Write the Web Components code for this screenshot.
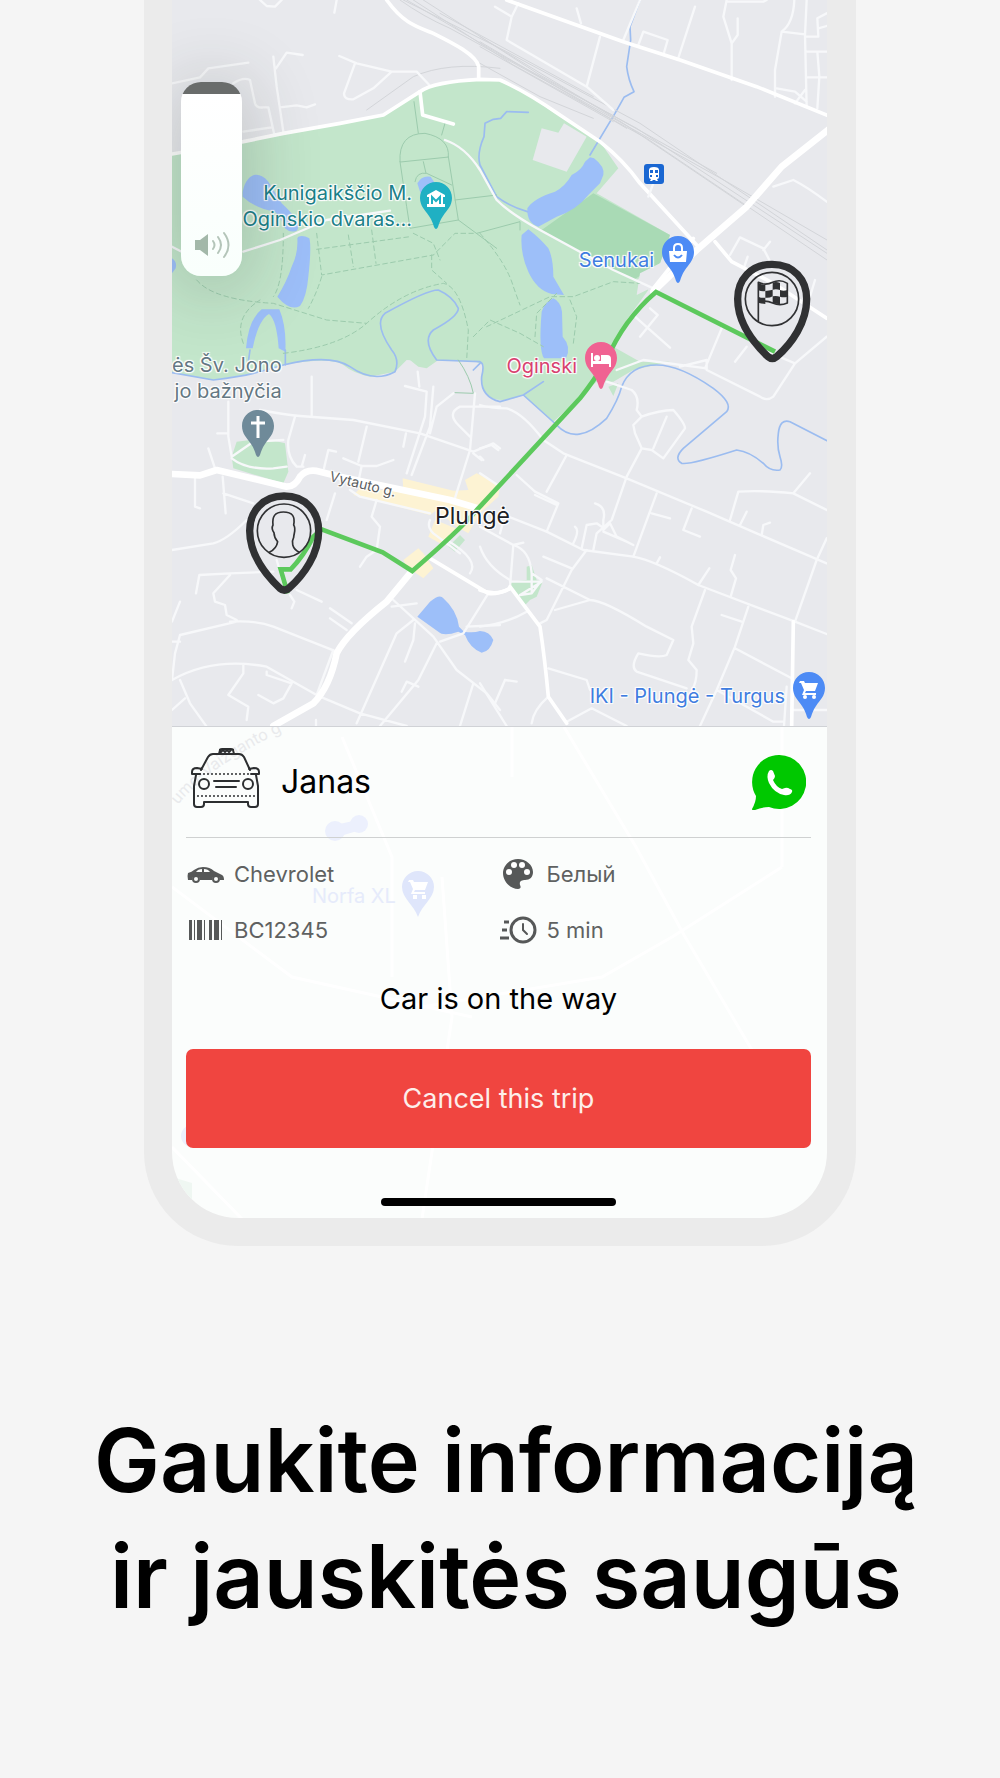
<!DOCTYPE html>
<html lang="lt">
<head>
<meta charset="utf-8">
<meta name="viewport" content="width=device-width, initial-scale=1">
<title>Gaukite informaciją ir jauskitės saugūs</title>
<style>
    body {
        margin: 0;
        background: #f5f5f5;
        color: #000;
        font-family: Inter, "Liberation Sans", sans-serif;
    }
</style>
</head>
<body>

<phone-frame>
    <city-map>
        <map-place kind="museum" style="right: 375px; top: 180px">Kunigaikščio M.<br>Oginskio dvaras...</map-place>
        <map-place kind="shop" style="right: 133px; top: 236px">Senukai</map-place>
        <map-place kind="hotel" style="right: 210px; top: 342px">Oginski</map-place>
        <map-place kind="church" style="left: 0; top: 352px">ės Šv. Jono<br>jo bažnyčia</map-place>
        <map-place kind="cart" style="right: 2px; top: 672px">IKI - Plungė - Turgus</map-place>
        <map-place kind="town" style="left: 263px; top: 502px">Plungė</map-place>
        <map-place kind="street" style="left: 157px; top: 474px">Vytauto g.</map-place>
        <map-place kind="station" style="right: 163px; top: 164px"></map-place>
        <volume-slider></volume-slider>
    </city-map>
    <trip-panel driver="Janas">
        <trip-fact icon="car">Chevrolet</trip-fact>
        <trip-fact icon="palette">Белый</trip-fact>
        <trip-fact icon="barcode">BC12345</trip-fact>
        <trip-fact icon="clock">5 min</trip-fact>
        <span slot="status">Car is on the way</span>
        <span slot="action">Cancel this trip</span>
    </trip-panel>
</phone-frame>
<promo-title>Gaukite informaciją<br>ir jauskitės saugūs</promo-title>

<script>
class PhoneFrame extends HTMLElement {
    connectedCallback() {
        this.shadow = this.attachShadow({ mode: 'open' });
        this.shadow.innerHTML = `
            <style>
            :host {
              display: block;
              box-sizing: border-box;
              width: 100%;
              max-width: 712px;
              margin: 0 auto;
              padding: 0 29px 28px 28px;
              background: #ebebeb;
              border-radius: 0 0 94px 94px;
            }
            .screen {
              overflow: hidden;
              background: #fbfdfc;
              border-radius: 0 0 66px 66px;
            }
            </style>
            <div class="screen"><slot></slot></div>`;
    }
}

class CityMap extends HTMLElement {
    connectedCallback() {
        this.shadow = this.attachShadow({ mode: 'open' });
        this.shadow.innerHTML = this.styles() + `
            <svg viewBox="96 0 1965 2181" preserveAspectRatio="xMinYMin slice" aria-hidden="true">
                ${this.areas()}
                ${this.paths()}
                ${this.roads()}
                ${this.route()}
            </svg>
            <slot></slot>`;
    }

    styles() {
        return `
            <style>
            :host {
              display: block;
              position: relative;
              height: 727px;
              overflow: hidden;
              background: #e8e9ed;
            }
            svg {
              display: block;
              box-sizing: border-box;
              width: 100%;
              height: 100%;
              border-bottom: 1px solid #d0d2d6;
            }
            path { fill: none; stroke-linejoin: round; stroke-linecap: round; }
            .park path { fill: #c3e6cb; }
            .park .dark { fill: #a9dab5; }
            .park .plain { fill: #e8e9ed; }
            .park .town { fill: #fdf3d3; }
            .water { fill: #9dbff9; }
            .river { stroke: #9bbcf0; stroke-width: 5; }
            .trail { stroke: #9ccbad; stroke-width: 3; }
            .dash { stroke: #9ccbad; stroke-width: 3; stroke-dasharray: 14 10; }
            .rail { stroke: #d3d5d9; stroke-width: 3; }
            .thin { stroke: #f7f8fa; stroke-width: 7; }
            .road { stroke: #fff; stroke-width: 11; }
            .main { stroke: #fff; stroke-width: 20; }
            .line { stroke: #5cc95c; stroke-width: 14; stroke-linejoin: miter; stroke-linecap: butt; }
            .pin { stroke: #303133; stroke-width: 22; }
            .ring { stroke: #303133; stroke-width: 5; fill: none; }
            .ink { fill: #303133; }
            </style>`;
    }

    areas() {
        return `
            <g class="park">
                <path d="M96 462 310 425 430 400 600 370 730 345 840 275 880 255 1020 238 1080 240 1140 270 1260 350 1380 425 1435 505 1370 580 1590 705 1560 790 1490 840 1525 870 1460 960 1420 1040 1500 1085 1590 1085 1480 1110 1420 1145 1370 1145 1240 1265 1150 1185Q1080 1215 1040 1185 1015 1150 1030 1095L1000 1082H890L840 1082 800 1080 765 1115 690 1130Q640 1120 610 1095 570 1070 430 1095L340 1120 220 1140 96 1118Z"/>
                <path d="M290 1325 370 1315 435 1330 445 1415 430 1450 280 1405 275 1370Z"/>
                <path d="M1160 1700 1175 1695 1190 1740 1208 1745 1190 1790 1170 1800 1155 1815 1110 1755 1112 1745 1160 1740Z"/>
                <path d="M925 1640 960 1605 975 1620 945 1655ZM810 1080H895L860 1105 835 1100ZM1405 1160 1435 1150 1420 1188Z"/>
                <path class="dark" d="M1360 580 1590 705 1560 790 1480 840 1320 755 1205 690Z"/>
                <path class="plain" d="M1205 385 1255 398 1272 370 1340 410 1280 515 1178 480Z"/>
                <path class="plain" d="M1500 820 1620 760 1540 860 1490 885Z"/>
                <path class="town" d="M788 1435 940 1472 985 1470 975 1440 1010 1420 1080 1455 1075 1490 1020 1540 985 1600 950 1580 890 1530 870 1545 640 1485 660 1465 790 1475ZM885 1560 960 1590 900 1630 865 1610ZM790 1680 835 1645 850 1660 880 1705 850 1735 800 1700Z"/>
            </g>
            <path class="water" d="M308 575C320 520 355 510 385 545L425 610Q490 670 470 692 450 700 435 685 425 655 405 635 345 625 308 590Z"/>
            <path class="water" d="M475 710Q490 705 508 715 515 740 505 830 500 890 480 918 450 935 412 890 440 845 455 800 475 760 472 715Z"/>
            <path class="water" d="M318 1045Q325 960 365 928H418Q440 980 436 1055L416 1045Q410 960 387 942 355 960 338 1045Z"/>
            <path class="water" d="M832 550Q845 525 872 530L885 550 845 590ZM96 775Q112 785 107 805L96 820Z"/>
            <path class="water" d="M1350 472 1362 475Q1395 500 1390 525L1380 550Q1360 570 1345 585 1310 630 1250 650L1195 680Q1160 670 1162 625 1180 595 1245 575 1275 560 1295 525 1325 510 1335 485Z"/>
            <path class="water" d="M1165 688Q1200 715 1225 745 1240 775 1240 830L1272 885 1235 882Q1190 870 1165 815 1140 760 1145 705Z"/>
            <path class="water" d="M1240 895Q1262 905 1266 935L1268 1010Q1295 1040 1278 1075H1212Q1195 1050 1205 935 1215 905 1240 895Z"/>
            <path class="water" d="M832 1850 870 1805Q900 1780 910 1795 950 1830 957 1880L972 1895Q1000 1900 1020 1893 1050 1895 1060 1920 1050 1955 1025 1958 990 1945 975 1905L955 1895Q910 1910 895 1895Z"/>`;
    }

    paths() {
        return `
            <path class="river" d="M1500 0 1470 80 1472 120 1460 200Q1465 240 1482 275L1452 292 1425 340 1350 465M1165 337 1100 335 1082 355 1060 358 1035 370 1032 410Q1010 460 1020 495L1070 590Q1110 620 1162 635"/>
            <path class="river" d="M96 1118 220 1140Q300 1130 340 1120T430 1095Q570 1060 630 1100 700 1150 765 1115 780 1080 755 1050 700 970 735 940 860 870 895 870 940 890 955 925 955 950 880 990 845 1020 890 1080L1020 1085Q1035 1090 1025 1130 1020 1190 1080 1205L1150 1185 1250 1275Q1310 1340 1400 1255 1435 1200 1445 1160 1470 1095 1550 1095 1620 1095 1720 1165 1780 1210 1760 1235L1630 1345Q1600 1375 1625 1390 1650 1395 1790 1350 1830 1355 1870 1390 1890 1415 1920 1410 1930 1400 1920 1370 1910 1340 1915 1300 1920 1255 1950 1265L2061 1322M1020 1090 1000 1110M1150 1185 1210 1145M436 1050V1095M330 1050 325 1085"/>
            <path class="trail" d="M822 305 835 400M915 370 905 405M780 485Q775 400 855 400 930 415 925 470ZM780 485 800 620 810 685 955 660 925 470M850 485 858 520M825 545Q830 515 860 520L935 555M945 600 1070 585M955 660 1070 745M1010 700 1140 665V690M955 1080Q990 1130 1000 1180L945 1178"/>
            <path class="dash" d="M430 700Q430 850 400 890M170 840Q220 900 400 910L560 960 680 970Q790 870 910 850 960 860 985 990L980 1080M310 1030Q280 950 360 900M430 1060Q600 1040 680 970M530 700 545 825 880 765 945 700 1000 700M530 748 810 710M625 705 640 800M695 690 708 790M545 830Q530 880 505 925M875 765V810L920 850M820 700 880 730 900 780M1020 700Q1100 790 1120 860L1140 915M1000 1010 1050 960 1140 1000 1210 1040M1040 980 1230 890 1300 890 1420 845 1500 850M1185 1010 1190 940 1250 880M1290 900 1310 950 1300 1030"/>
            <path class="rail" d="M680 330 820 230Q920 185 1080 205M780 0Q850 50 930 85L1250 260 1760 545 2061 720M790 0 1100 155 1500 370 2061 750M800 0 1100 175 1490 385 2061 760M820 0 1120 195 1520 415 2061 780M850 0 1200 225 1730 520M900 40 1360 290M1020 110 1450 370 1820 620M1020 125 1460 385M1020 140 1420 365M1020 190 1200 290 1360 355"/>`;
    }

    roads() {
        return `
            <g>
                <path class="thin" d="M360 0 380 18 405 20 425 0M590 0 583 38M96 250 180 232 205 205 325 188M280 250Q310 230 330 240L345 310Q350 325 370 322H385L402 400M310 395 395 382M400 170 410 260 430 395M408 205 440 158 488 165M420 322 470 316 500 322 525 313M598 168 650 190 755 215H830L868 255M645 190 612 280Q612 300 640 298L700 265 755 215"/>
                <path class="road" d="M740 0C790 70 830 80 880 100 940 130 1010 165 1016 200V235M840 275 848 345 940 372"/>
                <path class="thin" d="M96 740 125 755M310 755 420 720 560 660 750 632M915 420Q975 440 1020 510L1070 600Q1110 640 1200 690L1420 810 1540 865"/>
                <path class="road" d="M96 462 310 425 430 400 600 370 730 345 840 275Q880 245 1020 238L1080 240Q1160 275 1260 345L1380 425Q1450 480 1500 550L1670 735"/>
            </g>
            <g transform="translate(1020 0)">
                <path class="thin" d="M45 20 95 50 115 10M95 50 80 120 320 260 400 330M360 110 320 260M480 0 430 120M475 135 490 95 563 120 550 165M645 20 593 180M740 0 730 50 755 130V240M740 5H850L860 0M773 55V105L755 130M943 0Q940 70 905 95L885 210V290M905 95 975 103M980 0 975 105 980 320M1040 40 1012 55 1015 110H980M1015 85 1040 78M980 155H1040M1012 155 1018 230 1012 325M980 232H1040M890 265 945 275 980 305M975 270 945 310M290 25 303 70M520 550 505 590M880 560 940 540Q980 560 1040 605M750 765 780 712 850 745 868 780M850 750 870 725M803 770 793 800M930 390"/>
                <path class="road" d="M80 0 430 125 600 180 830 260 1040 345M1060 360 1035 400M640 715 520 865M705 725 755 785 880 850 1040 955"/>
                <path class="main" d="M1050 385 905 500 800 620 650 750 520 875"/>
                <path class="thin" d="M510 925 533 945 480 1010M465 950 570 1043M725 985 675 1105M850 1050 945 1090 1040 1010M945 1090 880 1190Q860 1205 840 1190L680 1110V1080L600 1100M800 1040 765 1085M1005 840 990 890M410 1110 490 1080 680 1105"/>
            </g>
            <g transform="translate(0 1080)">
                <path class="thin" d="M265 125V230L275 290 340 245 430 240M232 220H265M275 295Q320 330 400 325L440 320M205 265 225 325M360 150Q440 165 480 168L640 180 840 220 1000 275 1060 250 1080 265M515 50V165M465 170 445 240Q440 290 470 320L490 320M495 285 485 320M588 275 565 270 552 325M610 295 665 318 710 318 760 300M680 200 655 305M665 318 655 365M795 78 860 95 855 170 800 340M833 35 838 80M880 80 870 200 815 345M798 220 790 260M940 100 890 140 870 220M1005 100 990 270 940 430M1000 280 1025 300M1080 140H960Q920 160 955 195L990 230M165 355V440L180 445M248 350 257 460M250 400 340 430M96 570 220 550Q260 540 320 480M585 400 560 480M710 420 695 470 720 500 710 570 680 590 660 620M168 700 178 645 270 640 400 635M270 645 220 700 225 725 255 735 260 765 290 780M120 725 96 785M470 690 545 725M450 705 463 725 455 745M570 745 635 790M570 775 620 810M270 785Q350 780 400 800L590 875M290 785 120 825 105 880 96 960M96 845H120M96 960Q220 890 380 920L530 1005M310 915V940L265 1005 325 1040 320 1080M380 935V945L455 970 430 1015 400 1030 355 1005M120 960 150 1030 200 1100M96 1050 135 1015M540 1010 660 1060 800 1098M580 870 530 1005M760 720 880 830 950 930 1040 1000M820 780 770 820 650 1090M825 790 820 840 795 905M890 850 835 960 720 1098M785 995 800 965 835 980M1000 970 960 1098M900 845 970 820 1045 700M980 800 1080 795M755 740 830 730M870 480Q860 500 880 520L960 580M920 540Q1020 600 990 640M1020 560Q1040 620 1110 660M1040 1000 1080 1050M410 600 430 670M528 1080V1098"/>
                <path class="thin" d="M630 390 660 410 870 460"/>
                <path class="road" d="M870 595 1045 700Q1070 705 1110 685"/>
                <path class="main" d="M96 342 180 346 230 330 440 380Q465 380 480 350 500 325 540 335L600 350 930 420 1015 445M810 640 740 725Q620 820 590 880 570 980 520 1030L400 1098"/>
            </g>
            <g transform="translate(1020 1080)">
                <path class="thin" d="M380 65 455 90Q480 110 470 150L485 170Q540 150 580 150 615 190 615 205L550 295 515 270 485 265 465 220 460 195 485 170M560 170 520 265M485 265 440 350 395 480 350 520 340 570M260 285 200 395M110 345 165 395 235 430 200 515M165 405 230 435M345 430Q380 440 370 480V510L390 490 410 530 460 555M370 515 440 545M285 500Q300 510 280 550M305 565 320 495 350 490 365 500M530 400 460 590M515 460 570 475M635 445 610 510 660 530M750 480 775 395Q840 390 940 400L1040 450M940 400 990 340M780 495 800 455M845 525 850 495 870 488M530 610 540 592M655 675 688 625M765 585 752 630 768 655 752 710M675 690 635 800 640 850 625 900 650 930Q650 970 635 990M725 765 785 785M805 740 765 860 710 990 660 1098M765 865 935 955M1040 535 1010 600 945 785M320 570 275 630 200 780 180 790M190 590 275 625M200 655 330 720 225 750M330 720Q370 720 500 800L580 840 560 885Q540 895 475 880 450 920 470 935L620 985M205 925 320 960 330 990M75 960 110 965M75 960 45 1030M0 970 80 1098M155 1090Q160 1050 205 1010M260 1085 335 1045 440 1098M935 1050H1040M710 990 880 1085H910M912 1098 920 980M0 800Q80 790 140 755M60 520 68 490M100 555 130 548M100 555Q150 570 155 640L185 660 155 700 120 705M155 640V700M90 665H185L120 705M0 265 35 255 55 270M0 290 10 300"/>
                <path class="thin" d="M0 135Q30 145 80 145 130 160 190 240L250 280 440 355 680 455 830 520 1040 610M60 460 200 515 310 570 460 590Q520 600 655 675L945 785 1040 822M0 500 100 555 90 680M0 340 60 380"/>
                <path class="road" d="M90 680 180 800Q195 900 205 1010L260 1090M940 785 935 1098M0 690Q50 710 90 685"/>
            </g>`;
    }

    // green trip line, then the passenger and the finish pins
    route() {
        const drop = 'M432 408C368 408 329 455 329 512 329 582 378 645 420 685Q433 696 446 685C492 645 536 582 536 512 536 455 498 408 432 408Z';
        return `
            <path class="line" d="M443 1780 422 1708 452 1708Q490 1670 520 1610L545 1588 728 1657 817 1713Q960 1590 1015 1525L1320 1195Q1360 1145 1400 1080 1450 960 1548 876L1905 1055"/>
            <g transform="translate(0 1080)">
                <path class="pin" d="${drop}"/>
                <circle class="ring" cx="432" cy="512" r="80"/>
                <path class="ring" d="M388 577Q410 566 413 545 402 532 402 518 393 506 399 495C396 470 404 456 430 456 458 456 466 470 461 495 469 506 462 518 461 532 454 545 455 566 478 577"/>
            </g>
            <g transform="translate(1464 385)">
                <path class="pin" d="${drop}"/>
                <circle class="ring" cx="432" cy="512" r="80"/>
                <path class="ring" d="M391 578V462Q412 473 434 462T478 465V524Q456 534 434 524T391 522"/>
                <path class="ink" d="M391 464Q402 470 412 469V488Q402 490 391 486ZM434 463Q445 459 456 464V485Q445 481 434 484ZM412 488Q423 487 434 484V504Q423 510 412 508ZM456 485Q467 489 478 485V505Q467 508 456 505ZM391 505Q402 510 412 508V527Q402 526 391 523ZM434 504Q445 502 456 505V527Q445 528 434 524Z"/>
            </g>`;
    }
}

class MapPlace extends HTMLElement {
    connectedCallback() {
        this.shadow = this.attachShadow({ mode: 'open' });
        const kind = this.getAttribute('kind');
        this.shadow.innerHTML = `
            <style>
            :host {
              display: flex;
              align-items: center;
              gap: 8px;
              position: absolute;
              color: #3f7de0;
              font-size: 20px;
              line-height: 26px;
              text-align: right;
              white-space: nowrap;
              text-shadow: 0 0 2px #fff, 1px 1px 1px #fff, -1px -1px 1px #fff, 1px -1px 1px #fff, -1px 1px 1px #fff;
            }
            :host([kind="museum"]) { color: #1b8088; }
            :host([kind="hotel"]) { color: #d8416f; }
            :host([kind="church"]) { flex-direction: column; color: #647782; gap: 6px; }
            :host([kind="church"]) svg { align-self: flex-end; margin-right: 8px; }
            :host([kind="town"]) { color: #202124; font-size: 23px; line-height: 28px; }
            :host([kind="street"]) { color: #5b5e62; font-size: 14px; line-height: 20px; transform: rotate(14deg); }
            svg { display: block; flex: none; }
            </style>
            <span><slot></slot></span>${this.icon(kind)}`;
    }

    icon(kind) {
        const glyphs = {
            museum: ['#1fb0c3', '<path fill="#fff" d="M16 8 7 13v2h2v7H7v3h18v-3h-2v-7h2v-2z"/><path fill="none" stroke="#1fb0c3" stroke-width="2" d="M12 22v-7l4 4 4-4v7"/>'],
            shop: ['#4d8bf5', '<path fill="#fff" d="M7 15h18l-1 11H8z"/><path fill="none" stroke="#fff" stroke-width="2" d="M12 16v-4q0-4 4-4t4 4v4"/><path fill="none" stroke="#4d8bf5" stroke-width="2" d="M12 19q4 5 8 0"/>'],
            hotel: ['#f06292', '<path fill="#fff" d="M6 11h2v8h8v-6h6q4 0 4 4v8h-2v-3H8v3H6z"/><circle cx="12" cy="16" r="3" fill="#fff"/>'],
            church: ['#6f8a99', '<path stroke="#fff" stroke-width="3" d="M16 6v22M9 13h14"/>'],
            cart: ['#4d8bf5', '<path fill="#fff" d="M7 9h4l1 2h13l-3 8H13l-1 2h11v2H9l2-5-3-7H6z"/><circle cx="12" cy="25" r="2" fill="#fff"/><circle cx="21" cy="25" r="2" fill="#fff"/>']
        };
        if (kind === 'station') {
            return `
                <svg width="20" height="20" viewBox="0 0 20 20" role="img" aria-label="Station">
                    <rect width="20" height="20" rx="3" fill="#1a67d2"/>
                    <path fill="#fff" d="M5 6q0-3 5-3t5 3v7q0 2-2 2l1 2h-2l-1-1H9l-1 1H6l1-2q-2 0-2-2z"/>
                    <path fill="#1a67d2" d="M6 6h3v3H6zM11 6h3v3h-3zM6 11h2v2H6zM12 11h2v2h-2z"/>
                </svg>`;
        }
        if (!glyphs[kind]) {
            return '';
        }
        const [color, glyph] = glyphs[kind];
        return `
            <svg width="32" height="48" viewBox="0 0 32 48" aria-hidden="true">
                <path fill="${color}" d="M16 0C7 0 0 7 0 16c0 8 5 12 9 18 3 4 4 8 5 11q2 4 4 0c1-3 2-7 5-11 4-6 9-10 9-18C32 7 25 0 16 0z"/>
                ${glyph}
            </svg>`;
    }
}

class VolumeSlider extends HTMLElement {
    connectedCallback() {
        this.shadow = this.attachShadow({ mode: 'open' });
        this.shadow.innerHTML = `
            <style>
            :host {
              display: block;
              position: absolute;
              left: 9px;
              top: 82px;
              width: 61px;
              height: 194px;
              border-radius: 20px;
              box-shadow: 0 8px 70px 10px rgba(40, 50, 45, 0.2);
            }
            input {
              display: block;
              appearance: none;
              writing-mode: vertical-lr;
              direction: rtl;
              width: 100%;
              height: 100%;
              margin: 0;
              border-radius: inherit;
              background: linear-gradient(#696c6b 12px, #fff 12px, #f9fffc);
            }
            input::-webkit-slider-thumb { appearance: none; width: 1px; height: 1px; }
            svg { position: absolute; left: 13px; bottom: 17px; pointer-events: none; }
            </style>
            <input type="range" min="0" max="100" value="94" aria-label="Volume">
            <svg width="38" height="28" viewBox="0 0 38 28" aria-hidden="true">
                <path fill="#a3b8a9" d="M1 9h5l8-6v22l-8-6H1z"/>
                <path fill="none" stroke="#b4c5b9" stroke-width="2" stroke-linecap="round" d="M19 10q3 4 0 8M24 6q6 8 0 16M30 2q9 12 0 24"/>
            </svg>`;
    }
}

class TripPanel extends HTMLElement {
    connectedCallback() {
        this.shadow = this.attachShadow({ mode: 'open' });
        this.shadow.innerHTML = `
            <style>
            :host {
              display: block;
              position: relative;
              padding: 0 16px 12px 14px;
            }
            .backdrop {
              position: absolute;
              inset: 0;
              width: 100%;
              height: 100%;
            }
            .backdrop text { font-size: 20px; fill: #e6ebfb; }
            .backdrop .street { font-size: 16px; fill: #e9eaec; }
            header, .facts, .status, button, .home { position: relative; }
            header {
              display: flex;
              align-items: center;
              height: 110px;
              padding: 0 5px 0 4px;
              border-bottom: 1px solid #cfd1d1;
            }
            h2 {
              flex: 1;
              margin: 0 0 0 19px;
              font-size: 32px;
              line-height: 40px;
              font-weight: 400;
            }
            a, svg { display: block; }
            .taxi { margin-bottom: 8px; }
            .facts {
              display: grid;
              grid-template-columns: 1fr 1fr;
              grid-auto-rows: 56px;
              padding-top: 8px;
            }
            .status {
              margin: 21px 0 30px;
              font-size: 29px;
              line-height: 40px;
              text-align: center;
            }
            button {
              display: block;
              width: 100%;
              height: 99px;
              padding: 0;
              border: 0;
              border-radius: 7px;
              background: #f04540;
              color: #fdeeea;
              font: inherit;
              font-size: 27px;
            }
            .home {
              width: 235px;
              height: 8px;
              margin: 50px auto 0;
              border-radius: 4px;
              background: #000;
            }
            </style>
            ${this.backdrop()}
            <header>
                <svg class="taxi" width="72" height="62" viewBox="0 0 72 62" aria-hidden="true">
                    <g fill="none" stroke="#2c2e30" stroke-width="2" stroke-linecap="round" stroke-linejoin="round">
                        <path d="M11 23 18 10Q20 7 23 7H49Q52 7 54 10L60 23M29 7l1-4q0-1 2-1h9q2 0 2 1l1 4M31 5l2-2 2 2 2-2 2 2 2-2M10 27H2v-2q0-4 5-4l5 1M61 27h8v-2q0-4-5-4l-5 1M6 28 4 39V57q0 3 3 3h4q3 0 3-3V55H58v2q0 3 3 3h4q3 0 3-3V39L66 28"/>
                        <circle cx="14" cy="37" r="5"/>
                        <circle cx="58" cy="37" r="5"/>
                        <path d="M24 34H49M26 40H46"/>
                        <path stroke-dasharray="0 4" d="M10 27H64M8 49H66"/>
                    </g>
                </svg>
                <h2>${this.getAttribute('driver')}</h2>
                <a href="#whatsapp" aria-label="WhatsApp">
                    <svg width="54" height="55" viewBox="0 0 54 55">
                        <path fill="#00c800" d="M27 0A27 27 0 1 1 17 52Q10 52 3 55 0 56 0 54 4 47 4 41A27 27 0 0 1 27 0z"/>
                        <path fill="#fff" d="M17 16q2-2 4 0l2 5q0 2-2 4 3 7 9 9l3-1q2-1 5 1 3 1 2 3-2 4-8 3-10-2-15-12-3-7 0-12z"/>
                    </svg>
                </a>
            </header>
            <div class="facts"><slot></slot></div>
            <div class="status"><slot name="status"></slot></div>
            <button type="button"><slot name="action"></slot></button>
            <div class="home"></div>`;
    }

    // the map showing faintly through the sheet
    backdrop() {
        return `
            <svg class="backdrop" viewBox="0 0 655 492" preserveAspectRatio="xMinYMin slice" aria-hidden="true">
                <g fill="none" stroke="#fff" stroke-width="3">
                    <path d="M392 0 464 120 512 208 590 340M340 0V50M500 210 610 140M500 210 430 250 250 280M0 160 120 250 300 290M0 420 70 492M270 150 280 290 250 492M170 10 220 130V250M610 0V140"/>
                </g>
                <g fill="#ecf0fd">
                    <circle cx="163" cy="104" r="10"/>
                    <circle cx="187" cy="97" r="9"/>
                    <path d="M163 98 190 92 192 102 165 110z"/>
                    <path fill="#dfe6fb" d="M246 144a16 16 0 0 0-16 16c0 11 12 18 16 30 4-12 16-19 16-30a16 16 0 0 0-16-16z"/>
                    <circle cx="20" cy="409" r="11"/>
                </g>
                <path fill="#fff" d="M237 153h4l1 2h14l-3 8h-10l-1 2h11v2h-14l2-5-3-7h-2zM241 168h4v4h-4zM250 168h4v4h-4z"/>
                <path fill="#eff7f2" d="M0 450 20 456V480H0z"/>
                <text x="140" y="176">Norfa XL</text>
                <path id="street" fill="none" d="M6 78Q40 36 120 0"/>
                <text class="street"><textPath href="#street">umo-Vaižganto g</textPath></text>
            </svg>`;
    }
}

class TripFact extends HTMLElement {
    connectedCallback() {
        this.shadow = this.attachShadow({ mode: 'open' });
        this.shadow.innerHTML = `
            <style>
            :host {
              display: flex;
              align-items: center;
              gap: 10px;
              color: #5f6161;
              font-size: 22px;
              line-height: 28px;
            }
            svg { display: block; flex: none; }
            </style>
            <svg width="38" height="32" viewBox="0 0 38 32" aria-hidden="true">${this.icon(this.getAttribute('icon'))}</svg>
            <span><slot></slot></span>`;
    }

    icon(name) {
        const ink = '#565858';
        switch (name) {
            case 'car':
                return `
                    <path fill="${ink}" fill-rule="evenodd" d="M2 15q4-1 6-3 4-3 9-3 7 0 11 4l8 4q2 1 2 5h-4a4 4 0 0 0-8 0H14a4 4 0 0 0-8 0H2q-1-4 0-7zm8-1h6v-3q-4 0-6 3zm8-3v3h6q-2-3-6-3z"/>
                    <circle cx="10" cy="21" r="3" fill="none" stroke="${ink}" stroke-width="2"/>
                    <circle cx="30" cy="21" r="3" fill="none" stroke="${ink}" stroke-width="2"/>`;
            case 'palette':
                return `
                    <path fill="${ink}" d="M19 1C10 1 4 8 4 15c0 9 8 16 15 16 3 0 3-2 2-4-1-4 2-5 5-5 5 0 8-3 8-8C34 7 27 1 19 1z"/>
                    <circle cx="10" cy="14" r="3" fill="#fff"/>
                    <circle cx="15" cy="7" r="3" fill="#fff"/>
                    <circle cx="23" cy="7" r="3" fill="#fff"/>
                    <circle cx="28" cy="14" r="3" fill="#fff"/>`;
            case 'barcode':
                return `<path fill="${ink}" d="M3 6h3v20H3zM8 6h1v20H8zM11 6h5v20h-5zM18 6h1v20h-1zM23 6h3v20h-3zM28 6h5v20h-5zM35 6h1v20h-1z"/>`;
            default:
                return `
                    <g fill="none" stroke="${ink}" stroke-width="3" stroke-linecap="round">
                        <circle cx="24" cy="16" r="12"/>
                        <path stroke-width="2" d="M24 10v6l4 4"/>
                        <path stroke-linecap="butt" d="M5 8H10M3 16H8M1 24H10"/>
                    </g>`;
        }
    }
}

class PromoTitle extends HTMLElement {
    connectedCallback() {
        this.shadow = this.attachShadow({ mode: 'open' });
        this.shadow.innerHTML = `
            <style>
            :host { display: block; padding: 156px 16px 144px 28px; }
            h1 {
              margin: 0;
              font-size: 88px;
              line-height: 116px;
              font-weight: 600;
              text-align: center;
            }
            </style>
            <h1><slot></slot></h1>`;
    }
}

/**
 * Register the custom elements
 */
customElements.define('phone-frame', PhoneFrame);
customElements.define('city-map', CityMap);
customElements.define('map-place', MapPlace);
customElements.define('volume-slider', VolumeSlider);
customElements.define('trip-panel', TripPanel);
customElements.define('trip-fact', TripFact);
customElements.define('promo-title', PromoTitle);
</script>
</body>
</html>
